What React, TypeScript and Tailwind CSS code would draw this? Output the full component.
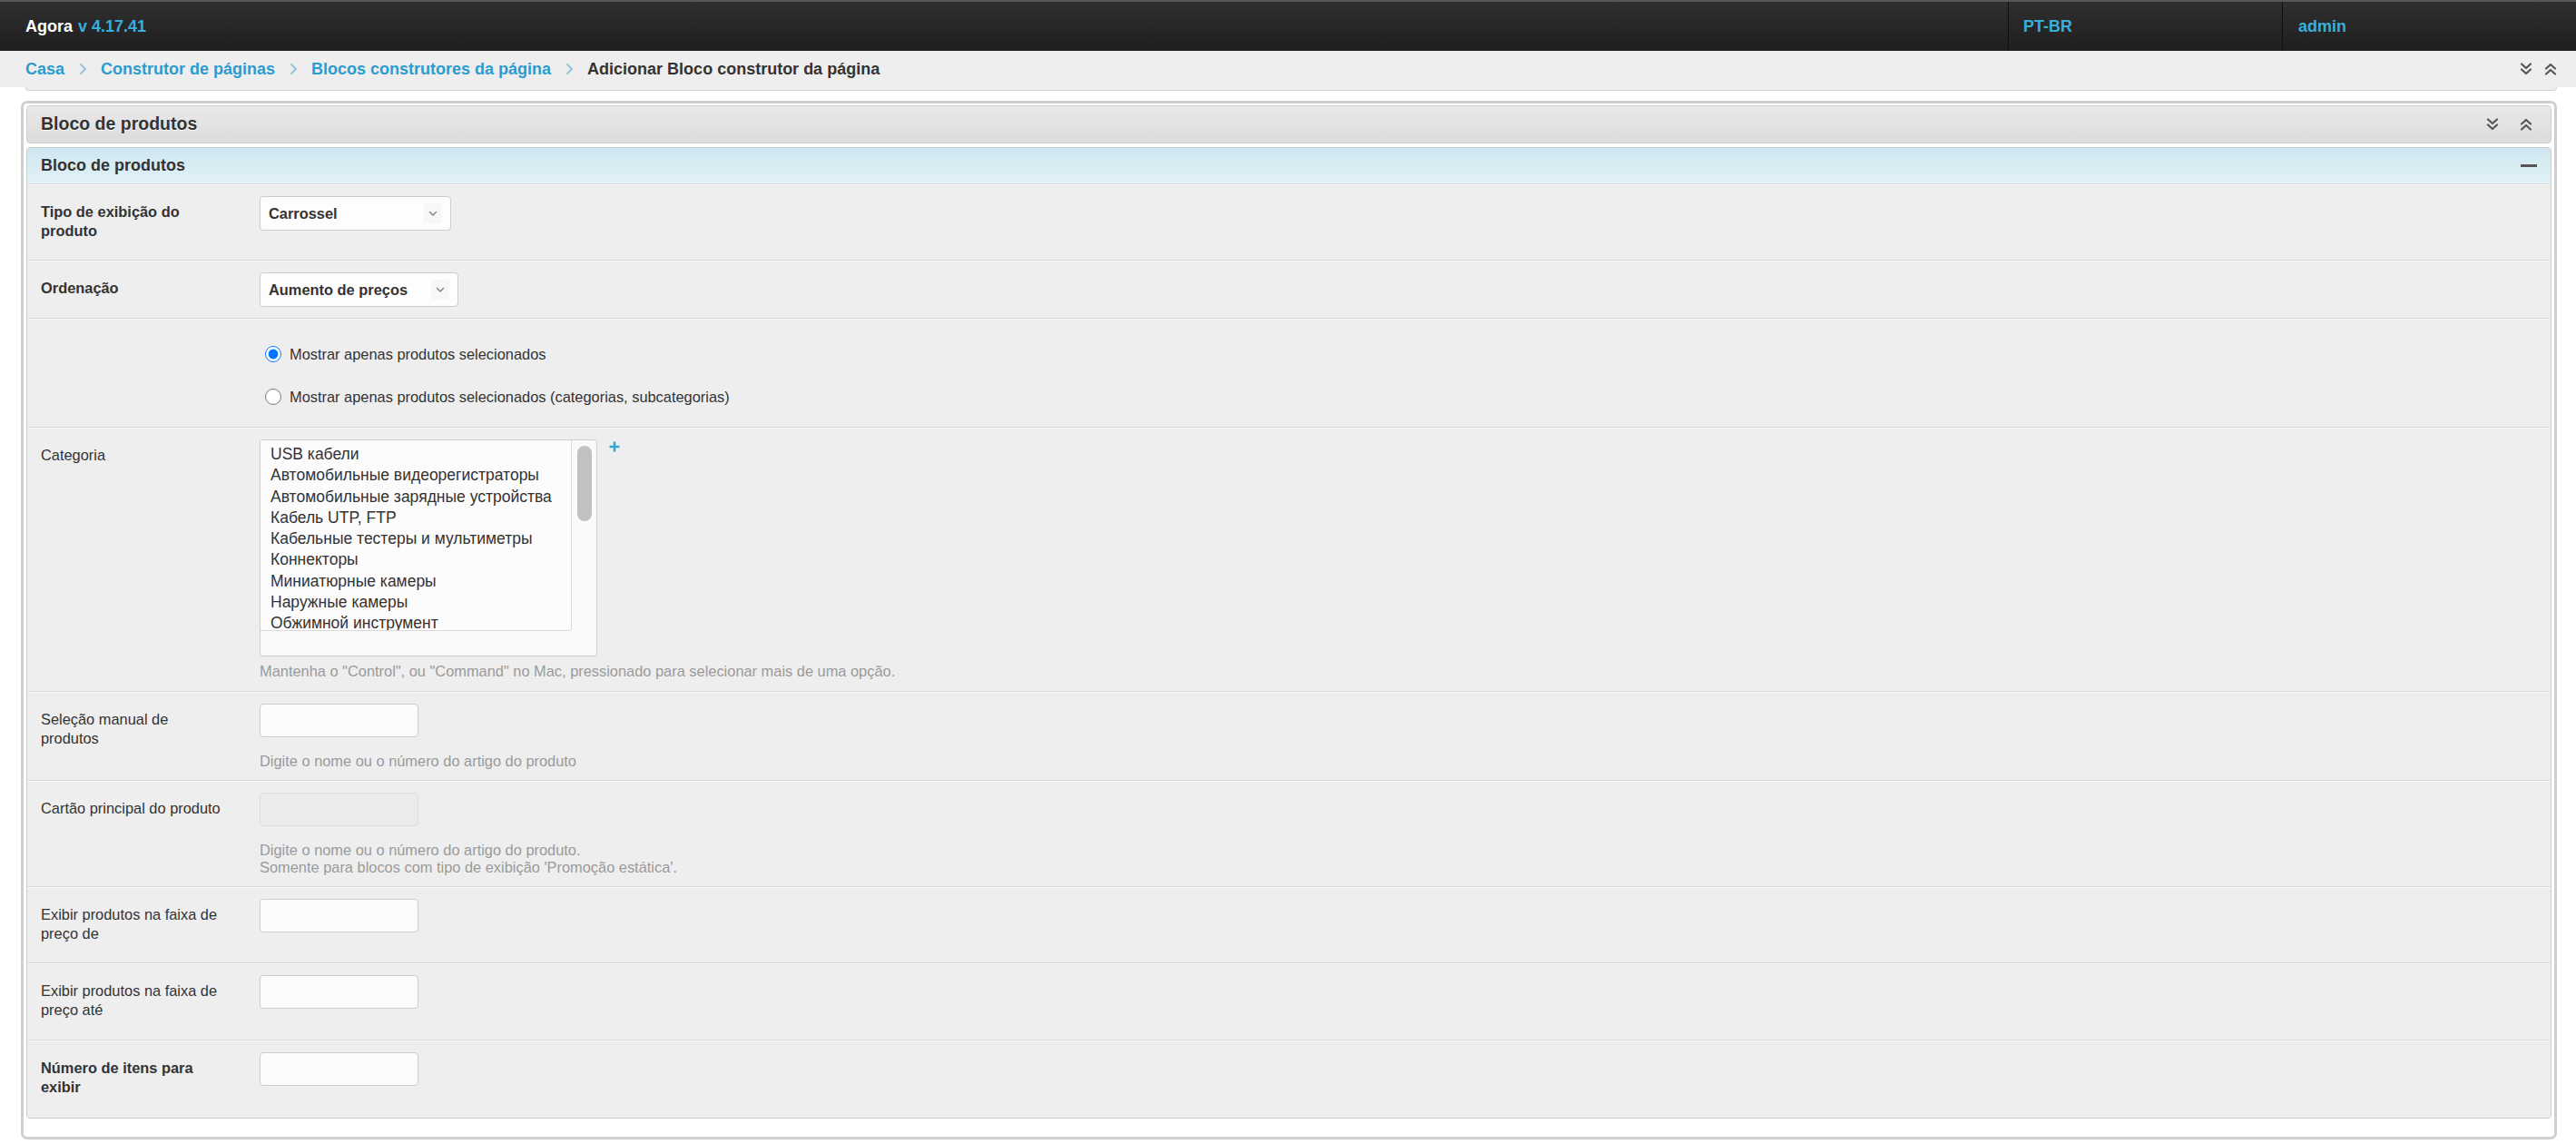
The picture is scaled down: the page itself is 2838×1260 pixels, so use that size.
import React from 'react';

const font = { fontFamily: '"Liberation Sans", Arial, Helvetica, sans-serif' };

const categories = [
  'USB кабели',
  'Автомобильные видеорегистраторы',
  'Автомобильные зарядные устройства',
  'Кабель UTP, FTP',
  'Кабельные тестеры и мультиметры',
  'Коннекторы',
  'Миниатюрные камеры',
  'Наружные камеры',
  'Обжимной инструмент',
];

function DoubleDown({ className = '' }: { className?: string }) {
  return (
    <svg width="16" height="16" viewBox="0 0 16 16" className={className} fill="none" stroke="#555" strokeWidth="2.2" strokeLinecap="round" strokeLinejoin="round">
      <path d="M3 2.5l5 4.5 5-4.5" />
      <path d="M3 8.5l5 4.5 5-4.5" />
    </svg>
  );
}

function DoubleUp({ className = '' }: { className?: string }) {
  return (
    <svg width="16" height="16" viewBox="0 0 16 16" className={className} fill="none" stroke="#555" strokeWidth="2.2" strokeLinecap="round" strokeLinejoin="round">
      <path d="M3 7.5l5-4.5 5 4.5" />
      <path d="M3 13.5l5-4.5 5 4.5" />
    </svg>
  );
}

function Chevron() {
  return (
    <span className="flex h-[22px] w-[20px] items-center justify-center bg-[#f7f7f7]">
      <svg width="10" height="7" viewBox="0 0 10 7" fill="none" stroke="#8a8a8a" strokeWidth="1.6" strokeLinecap="round" strokeLinejoin="round">
        <path d="M1.5 1.5l3.5 3.5 3.5-3.5" />
      </svg>
    </span>
  );
}

function Crumb({ children, last }: { children: React.ReactNode; last?: boolean }) {
  return (
    <span className={last ? 'text-[#333]' : 'text-[#2a9cd0]'}>{children}</span>
  );
}

function Sep() {
  return (
    <svg width="10" height="14" viewBox="0 0 10 14" className="mx-[15px]" fill="none" stroke="#8fc3da" strokeWidth="1.8" strokeLinecap="round" strokeLinejoin="round">
      <path d="M3 2l5 5-5 5" />
    </svg>
  );
}

function Row({ h, label, bold, children }: { h: string; label?: string; bold?: boolean; children?: React.ReactNode }) {
  return (
    <div className={`flex border-t border-[#d8d8d8] pl-[15px] pt-[13px] shadow-[inset_0_1px_0_#fafafa] ${h}`}>
      <div className="w-[241px] shrink-0 pt-[7px]">
        {label && (
          <div className={`w-[200px] text-[16.4px] leading-[20.5px] text-[#333] ${bold ? 'font-bold' : ''}`}>{label}</div>
        )}
      </div>
      <div className="flex flex-col">{children}</div>
    </div>
  );
}

function TextInput({ disabled }: { disabled?: boolean }) {
  return (
    <div
      className={`h-[37px] w-[175px] rounded-[4px] border ${
        disabled ? 'border-[#dddddd] bg-[#ebebeb]' : 'border-[#cccccc] bg-[#fcfcfc]'
      }`}
    />
  );
}

function Hint({ children, className = '' }: { children: React.ReactNode; className?: string }) {
  return <div className={`text-[16.4px] leading-[19px] text-[#9a9a9a] ${className}`}>{children}</div>;
}

export default function App() {
  return (
    <div className="min-h-[1260px] w-[2838px] bg-white" style={font}>
      {/* top bar */}
      <div className="flex h-[56px] border-t-[2px] border-[#565656] bg-gradient-to-b from-[#303030] to-[#1e1e1e]">
        <div className="flex flex-1 items-center pl-[28px] text-[18px] font-bold">
          <span className="text-white">Agora</span>
          <span className="ml-[6px] text-[#3aaedb]">v 4.17.41</span>
        </div>
        <div className="flex w-[302px] items-center border-l border-[#0e0e0e] pl-[16px] text-[18px] font-bold text-[#3aaedb]">
          PT-BR
        </div>
        <div className="flex w-[324px] items-center border-l border-[#0e0e0e] pl-[17px] text-[18px] font-bold text-[#3aaedb]">
          admin
        </div>
      </div>

      {/* breadcrumb */}
      <div className="flex h-[40px] items-center bg-[#eeeeee] pl-[28px] pr-[20px] text-[18px] font-bold">
        <Crumb>Casa</Crumb>
        <Sep />
        <Crumb>Construtor de páginas</Crumb>
        <Sep />
        <Crumb>Blocos construtores da página</Crumb>
        <Sep />
        <Crumb last>Adicionar Bloco construtor da página</Crumb>
        <div className="ml-auto flex items-center gap-[11px]">
          <DoubleDown />
          <DoubleUp />
        </div>
      </div>
      <div className="ml-[28px] mr-[21px] h-[4px] rounded-b-[5px] border-x border-b border-[#d2d2d2] bg-[#eeeeee]" />

      {/* panel */}
      <div className="ml-[23px] mr-[21px] mt-[11px] rounded-[7px] border-[3px] border-[#cfcfcf] px-[3px] pb-[20px] pt-[2px]">
        <div className="flex h-[42px] items-center rounded-[4px] border border-[#cccccc] bg-gradient-to-b from-[#e9e9e9] to-[#dcdcdc] pl-[15px] pr-[19px]">
          <span className="text-[19.5px] font-bold text-[#333] [text-shadow:0_1px_0_#fff]">Bloco de produtos</span>
          <div className="ml-auto flex items-center gap-[21px]">
            <DoubleDown />
            <DoubleUp />
          </div>
        </div>

        <div className="mt-[4px] overflow-hidden rounded-[4px] border border-[#cccccc] bg-[#eeeeee]">
          <div className="flex h-[39px] items-center bg-gradient-to-b from-[#cfe7f0] to-[#e2f1f7] pl-[15px] pr-[15px]">
            <span className="text-[18px] font-bold text-[#333]">Bloco de produtos</span>
            <span className="ml-auto h-[3px] w-[18px] bg-[#555]" />
          </div>

          <Row h="h-[84px]" label="Tipo de exibição do produto" bold>
            <div className="flex h-[38px] w-[211px] items-center justify-between rounded-[4px] border border-[#cccccc] bg-[#fdfdfd] pl-[9px] pr-[9px] text-[16.4px] font-bold text-[#333]">
              Carrossel
              <Chevron />
            </div>
          </Row>

          <Row h="h-[64px]" label="Ordenação" bold>
            <div className="flex h-[38px] w-[219px] items-center justify-between rounded-[4px] border border-[#cccccc] bg-[#fdfdfd] pl-[9px] pr-[9px] text-[16.4px] font-bold text-[#333]">
              Aumento de preços
              <Chevron />
            </div>
          </Row>

          <Row h="h-[120px]">
            <div className="flex flex-col gap-[25px] pt-[15px] text-[16.4px] leading-[22px] text-[#333]">
              <label className="flex items-center gap-[9px] pl-[6px]">
                <input type="radio" name="sel" defaultChecked className="m-0 h-[18px] w-[18px]" />
                Mostrar apenas produtos selecionados
              </label>
              <label className="flex items-center gap-[9px] pl-[6px]">
                <input type="radio" name="sel" className="m-0 h-[18px] w-[18px]" />
                Mostrar apenas produtos selecionados (categorias, subcategorias)
              </label>
            </div>
          </Row>

          <Row h="h-[291px]" label="Categoria">
            <div className="flex items-start">
              <div className="relative h-[239px] w-[372px] rounded-[3px] border border-[#cccccc] bg-[#fafafa]">
                <div className="h-[210px] w-[343px] overflow-hidden rounded-br-[3px] border-b border-r border-[#dadada] bg-[#fcfcfc] pl-[11px] pt-[4px] text-[17.5px] leading-[23.3px] text-[#333]">
                  {categories.map((c) => (
                    <div key={c} className="whitespace-nowrap">{c}</div>
                  ))}
                </div>
                <div className="absolute left-[349px] top-[6px] h-[83px] w-[16px] rounded-full bg-[#c1c1c1]" />
              </div>
              <svg width="14" height="14" viewBox="0 0 14 14" className="ml-[12px] mt-[1px]">
                <path d="M7 1.5v11M1.5 7h11" stroke="#3aa6d2" strokeWidth="2.6" />
              </svg>
            </div>
            <Hint className="mt-[7px]">
              Mantenha o "Control", ou "Command" no Mac, pressionado para selecionar mais de uma opção.
            </Hint>
          </Row>

          <Row h="h-[98px]" label="Seleção manual de produtos">
            <TextInput />
            <Hint className="mt-[17px]">Digite o nome ou o número do artigo do produto</Hint>
          </Row>

          <Row h="h-[117px]" label="Cartão principal do produto">
            <TextInput disabled />
            <Hint className="mt-[17px]">
              Digite o nome ou o número do artigo do produto.
              <br />
              Somente para blocos com tipo de exibição 'Promoção estática'.
            </Hint>
          </Row>

          <Row h="h-[84px]" label="Exibir produtos na faixa de preço de">
            <TextInput />
          </Row>

          <Row h="h-[85px]" label="Exibir produtos na faixa de preço até">
            <TextInput />
          </Row>

          <Row h="h-[86px]" label="Número de itens para exibir" bold>
            <TextInput />
          </Row>
        </div>
      </div>
    </div>
  );
}
